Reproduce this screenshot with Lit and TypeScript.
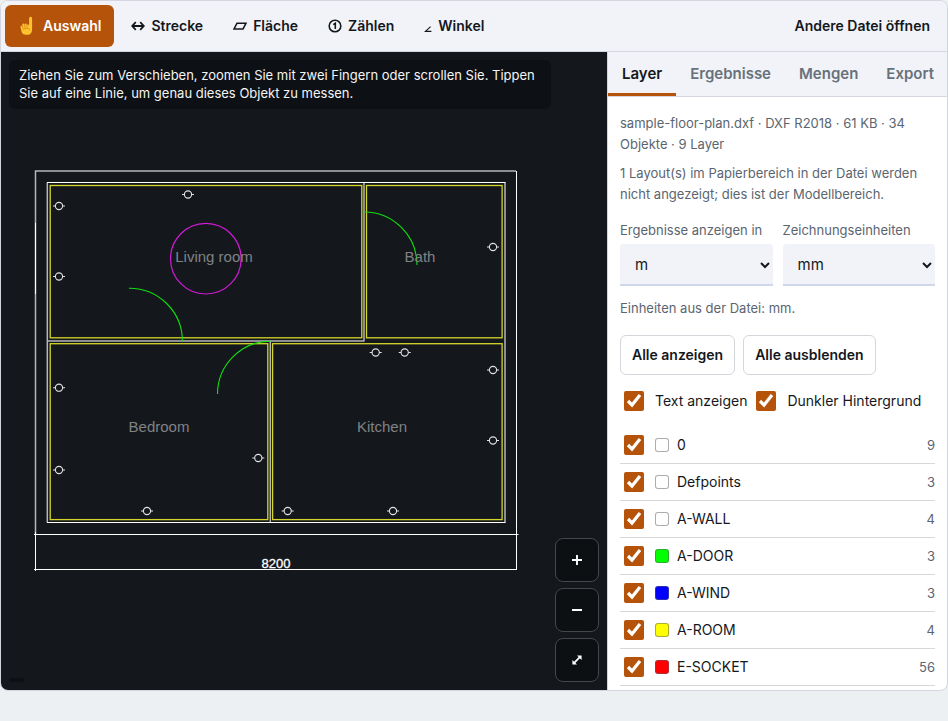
import { LitElement, html, css, svg } from "lit";
import { customElement, state } from "lit/decorators.js";
import { classMap } from "lit/directives/class-map.js";

interface Layer {
  name: string;
  color: string;
  count: number;
}

const LAYERS: Layer[] = [
  { name: "0", color: "#ffffff", count: 9 },
  { name: "Defpoints", color: "#ffffff", count: 3 },
  { name: "A-WALL", color: "#ffffff", count: 4 },
  { name: "A-DOOR", color: "#00ff00", count: 3 },
  { name: "A-WIND", color: "#0000ff", count: 3 },
  { name: "A-ROOM", color: "#ffff00", count: 4 },
  { name: "E-SOCKET", color: "#ff0000", count: 56 },
];

const SOCKETS = [
  [58, 154], [187, 142.5], [58, 224.5], [492, 195], [374.7, 300.5], [403.7, 300.5], [492, 318],
  [492, 388.5], [58, 335.7], [58, 418], [146, 459], [257.3, 406], [286.7, 459], [392, 459],
];

const ROOMS = [
  [49.2, 133.5, 311.6, 152.3],
  [365.5, 133.5, 135.6, 152.3],
  [49.2, 291.7, 217.6, 175.9],
  [271.6, 291.7, 229.5, 175.9],
];

/* The floor plan itself, drawn in its own coordinate space. */
@customElement("floor-plan")
export class FloorPlan extends LitElement {
  static styles = css`
    :host { display: block; }
    svg { display: block; width: 100%; height: 100%; }
    .line { fill: none; stroke: #fff; stroke-width: 1; }
    .soft { stroke: #b4b6b8; stroke-width: 1.5; }
    .room { fill: none; stroke: #d6d62a; stroke-width: 1.3; }
    .door { fill: none; stroke: #10e010; stroke-width: 1.1; }
    .lamp { fill: none; stroke: #d01ad4; stroke-width: 1.2; }
    .socket { fill: none; stroke: #e2e3e4; stroke-width: 1.1; }
    .label { font: 15px "Liberation Sans", Arial, sans-serif; fill: #808284; text-anchor: middle; }
    .dim { font: 13px "Liberation Sans", Arial, sans-serif; fill: #fff; stroke: #fff; stroke-width: 0.3; text-anchor: middle; }
  `;

  render() {
    return html`<svg viewBox="0 0 606 638" role="img" aria-label="Grundriss">
      <path class="line soft" d="M34.500 482V119H515"></path>
      <path class="line" d="M515.500 119V518M34.500 171v71M33 482.500H517.500M34.500 480V519M33 517.500H516"></path>
      <path class="line soft" d="M46.300 130.500V470.500M504 130.500V470.500M363 130.500V289M269.300 289V470.500M46 289H363.500"></path>
      <path class="line" d="M46 130.500H504.500M46 470.500H504.500"></path>
      ${ROOMS.map(([x, y, w, h]) => svg`<rect class="room" x=${x} y=${y} width=${w} height=${h}></rect>`)}
      <path class="door" d="M128 236.200A53 53 0 0 1 181.400 289M363.500 160A53 53 0 0 1 416 213M216.500 342A53 53 0 0 1 269.500 289.200"></path>
      <circle class="lamp" cx="204.800" cy="206.700" r="35.300"></circle>
      ${SOCKETS.map(([x, y]) => svg`
        <circle class="socket" cx=${x} cy=${y} r="3.6"></circle>
        <path class="socket" d="M${x - 6} ${y}h2.4M${x + 3.6} ${y}h2.4"></path>`)}
      <text class="label" x="213" y="210">Living room</text>
      <text class="label" x="419" y="210">Bath</text>
      <text class="label" x="158" y="380">Bedroom</text>
      <text class="label" x="381" y="380">Kitchen</text>
      <text class="dim" x="275" y="516">8200</text>
    </svg>`;
  }
}

const toolIcons = {
  select: svg`<svg class="icon hand" viewBox="0 0 16 20" aria-hidden="true">
    <path d="M9.6 9.5V2.2a1.5 1.5 0 0 1 3 0V13c0 3.6-1.6 5.8-4.6 5.8H6.2c-2.2 0-3.4-1-4-2.8L1 11.6C.6 10 1.8 9.4 2.8 9.800V8.600c0-1.300 1.700-1.500 2.300-.4.700-1 2.100-.7 2.300.5.700-.6 2-.3 2.200.8z" fill="#fdc22e"></path>
    <path d="M2.8 9.600l.6 2.600M5.100 8.500l.4 3M7.400 8.800l.2 2.500M4 13.200c2.500-1 4.500-1.200 6.200.2" fill="none" stroke="#d98a12" stroke-width="0.9" stroke-linecap="round"></path>
  </svg>`,
  distance: svg`<svg class="icon" viewBox="0 0 14 14" aria-hidden="true">
    <path d="M1.500 7H12.500M4.800 3.200L1.200 7l3.600 3.800M9.200 3.200L12.800 7l-3.600 3.800" fill="none" stroke="currentColor" stroke-width="1.8"></path>
  </svg>`,
  area: svg`<svg class="icon" viewBox="0 0 14 14" aria-hidden="true">
    <path d="M4 4.200H13L10 10H1z" fill="none" stroke="currentColor" stroke-width="1.6"></path>
  </svg>`,
  count: svg`<svg class="icon" viewBox="0 0 14 14" aria-hidden="true">
    <circle cx="7" cy="7" r="5.800" fill="none" stroke="currentColor" stroke-width="1.600"></circle>
    <path d="M5.300 5.600L7.300 4.300V10" fill="none" stroke="currentColor" stroke-width="1.600"></path>
  </svg>`,
  angle: svg`<svg class="icon narrow" viewBox="0 0 8 14" aria-hidden="true">
    <path d="M6.600 7.600L1.400 12.400H7.400" fill="none" stroke="currentColor" stroke-width="1.100"></path>
  </svg>`,
};

const TOOLS = [
  { id: "select", label: "Auswahl", icon: toolIcons.select },
  { id: "distance", label: "Strecke", icon: toolIcons.distance },
  { id: "area", label: "Fläche", icon: toolIcons.area },
  { id: "count", label: "Zählen", icon: toolIcons.count },
  { id: "angle", label: "Winkel", icon: toolIcons.angle },
];

const TABS = ["Layer", "Ergebnisse", "Mengen", "Export"];

@customElement("app-root")
export class AppRoot extends LitElement {
  @state() private tool = "select";
  @state() private tab = "Layer";

  static styles = css`
    :host {
      display: flex;
      flex-direction: column;
      box-sizing: border-box;
      height: 100vh;
      padding-bottom: 30px;
      background: #ecf0f3;
      color: #14181d;
      font: 14px/20px Inter, "Liberation Sans", sans-serif;
    }
    * { box-sizing: border-box; }
    button, select { font: inherit; color: inherit; margin: 0; }
    button { cursor: pointer; }
    .viewer {
      flex: 1;
      min-height: 0;
      display: flex;
      flex-direction: column;
      border: 1px solid #d3d6de;
      border-radius: 8px;
      overflow: hidden;
      background: #fff;
    }
    .toolbar {
      display: flex;
      align-items: center;
      gap: 4px;
      padding: 4px;
      background: #f1f3f8;
      border-bottom: 1px solid #d3d6de;
    }
    .tool {
      display: flex;
      align-items: center;
      gap: 6px;
      height: 42px;
      padding: 0 13px;
      border: 0;
      border-radius: 6px;
      background: none;
      font-weight: 600;
      white-space: nowrap;
    }
    .tool.active { background: #b5530a; color: #fff; }
    .open { margin-left: auto; }
    .icon { width: 14px; height: 14px; flex: none; }
    .icon.hand { width: 19px; height: 20px; }
    .icon.narrow { width: 8px; }
    .main { flex: 1; min-height: 0; display: flex; }
    .stage {
      position: relative;
      flex: 1;
      min-width: 0;
      background: #14181d;
    }
    .plan { height: 100%; }
    .hint {
      position: absolute;
      top: 8px;
      left: 8px;
      right: 56px;
      margin: 0;
      padding: 6px 10px 7px;
      border-radius: 6px;
      background: #0d1014;
      color: #f4f5f6;
      font-size: 13px;
      line-height: 18px;
    }
    .zoom {
      position: absolute;
      right: 8px;
      bottom: 8px;
      display: flex;
      flex-direction: column;
      gap: 6px;
    }
    .zoom button {
      display: grid;
      place-items: center;
      width: 44px;
      height: 44px;
      padding: 0;
      border: 1px solid #44484c;
      border-radius: 8px;
      background: #0c1013;
      color: #fff;
    }
    .zoom svg { width: 12px; height: 12px; }
    .readout {
      position: absolute;
      left: 8px;
      bottom: 8px;
      width: 16px;
      height: 4px;
      border-radius: 2px;
      background: #0d1014;
    }
    .side {
      flex: none;
      width: 340px;
      display: flex;
      flex-direction: column;
      border-left: 1px solid #d3d6de;
      overflow: hidden;
    }
    .tabs {
      flex: none;
      display: flex;
      background: #f1f3f8;
      border-bottom: 1px solid #d3d6de;
    }
    .tab {
      height: 44px;
      padding: 3px 14px 0;
      border: 0;
      border-bottom: 3px solid transparent;
      background: none;
      color: #67717b;
      font-size: 15px;
      font-weight: 600;
      white-space: nowrap;
    }
    .tab.active { color: #14181d; border-bottom-color: #b5530a; }
    .panel {
      flex: 1;
      min-height: 0;
      overflow: hidden;
      padding: 16px 12px 0;
    }
    .note {
      margin: 0 0 8px;
      color: #5b6570;
      font-size: 13px;
      line-height: 21px;
    }
    .units { display: flex; gap: 10px; margin: 15px 0 12px; }
    .field {
      flex: 1;
      min-width: 0;
      display: flex;
      flex-direction: column;
      gap: 4px;
      color: #5b6570;
      font-size: 13px;
      white-space: nowrap;
    }
    .field select {
      height: 42px;
      padding: 0 11px;
      border: 0;
      border-bottom: 2px solid #d0d7e8;
      border-radius: 3px 3px 0 0;
      background-color: #f1f3f8;
      color: #14181d;
      font-size: 15px;
    }
    .actions { display: flex; gap: 8px; margin-top: 16px; }
    .actions button {
      height: 40px;
      padding: 0 11px;
      border: 1px solid #d3d6da;
      border-radius: 6px;
      background: #fff;
      font-weight: 600;
      white-space: nowrap;
    }
    input[type="checkbox"] {
      flex: none;
      width: 20px;
      height: 20px;
      margin: 0;
      accent-color: #b5530a;
    }
    .options { display: flex; gap: 9px; margin-top: 16px; padding-left: 4px; }
    .options label { display: flex; gap: 11px; white-space: nowrap; }
    .layers { list-style: none; margin: 16px 0 0; padding: 0; }
    .layer {
      display: flex;
      align-items: center;
      height: 37px;
      border-bottom: 1px solid #d6d8dc;
    }
    .layer label { flex: 1; display: flex; align-items: center; padding-left: 4px; }
    .swatch {
      width: 14px;
      height: 14px;
      margin: 0 8px 0 11px;
      border: 1px solid rgba(90, 90, 100, 0.5);
      border-radius: 3px;
    }
    .amount { color: #5b6570; font-size: 13px; }
  `;

  render() {
    return html`
      <div class="viewer">
        <div class="toolbar" role="toolbar" aria-label="Werkzeuge">
          ${TOOLS.map((t) => html`<button
            class=${classMap({ tool: true, active: this.tool === t.id })}
            aria-pressed=${this.tool === t.id}
            @click=${() => (this.tool = t.id)}
          >${t.icon}<span>${t.label}</span></button>`)}
          <button class="tool open">Andere Datei öffnen</button>
        </div>
        <div class="main">
          <div class="stage">
            <floor-plan class="plan"></floor-plan>
            <p class="hint">Ziehen Sie zum Verschieben, zoomen Sie mit zwei Fingern oder scrollen Sie. Tippen Sie auf eine Linie, um genau dieses Objekt zu messen.</p>
            <div class="readout"></div>
            <div class="zoom">
              <button aria-label="Vergrößern"><svg viewBox="0 0 12 12"><path d="M1 6H11M6 1V11" fill="none" stroke="currentColor" stroke-width="1.9"></path></svg></button>
              <button aria-label="Verkleinern"><svg viewBox="0 0 12 12"><path d="M1 6H11" fill="none" stroke="currentColor" stroke-width="2"></path></svg></button>
              <button aria-label="Einpassen"><svg viewBox="0 0 12 12"><path d="M3.2 8.800L8.800 3.200" fill="none" stroke="currentColor" stroke-width="1.7"></path><path d="M6 1.400H10.600V6zM1.400 6V10.600H6z" fill="currentColor"></path></svg></button>
            </div>
          </div>
          <aside class="side">
            <div class="tabs" role="tablist">
              ${TABS.map((t) => html`<button
                role="tab"
                aria-selected=${this.tab === t}
                class=${classMap({ tab: true, active: this.tab === t })}
                @click=${() => (this.tab = t)}
              >${t}</button>`)}
            </div>
            <div class="panel">
              <p class="note">sample-floor-plan.dxf · DXF R2018 · 61 KB · 34 Objekte · 9 Layer</p>
              <p class="note">1 Layout(s) im Papierbereich in der Datei werden nicht angezeigt; dies ist der Modellbereich.</p>
              <div class="units">
                <label class="field">Ergebnisse anzeigen in
                  <select><option>m</option><option>cm</option><option>mm</option></select>
                </label>
                <label class="field">Zeichnungseinheiten
                  <select><option>mm</option><option>cm</option><option>m</option></select>
                </label>
              </div>
              <p class="note">Einheiten aus der Datei: mm.</p>
              <div class="actions">
                <button>Alle anzeigen</button>
                <button>Alle ausblenden</button>
              </div>
              <div class="options">
                <label><input type="checkbox" checked>Text anzeigen</label>
                <label><input type="checkbox" checked>Dunkler Hintergrund</label>
              </div>
              <ul class="layers">
                ${LAYERS.map((l) => html`<li class="layer">
                  <label><input type="checkbox" checked><span class="swatch" style="background:${l.color}"></span>${l.name}</label>
                  <span class="amount">${l.count}</span>
                </li>`)}
              </ul>
            </div>
          </aside>
        </div>
      </div>
    `;
  }
}
